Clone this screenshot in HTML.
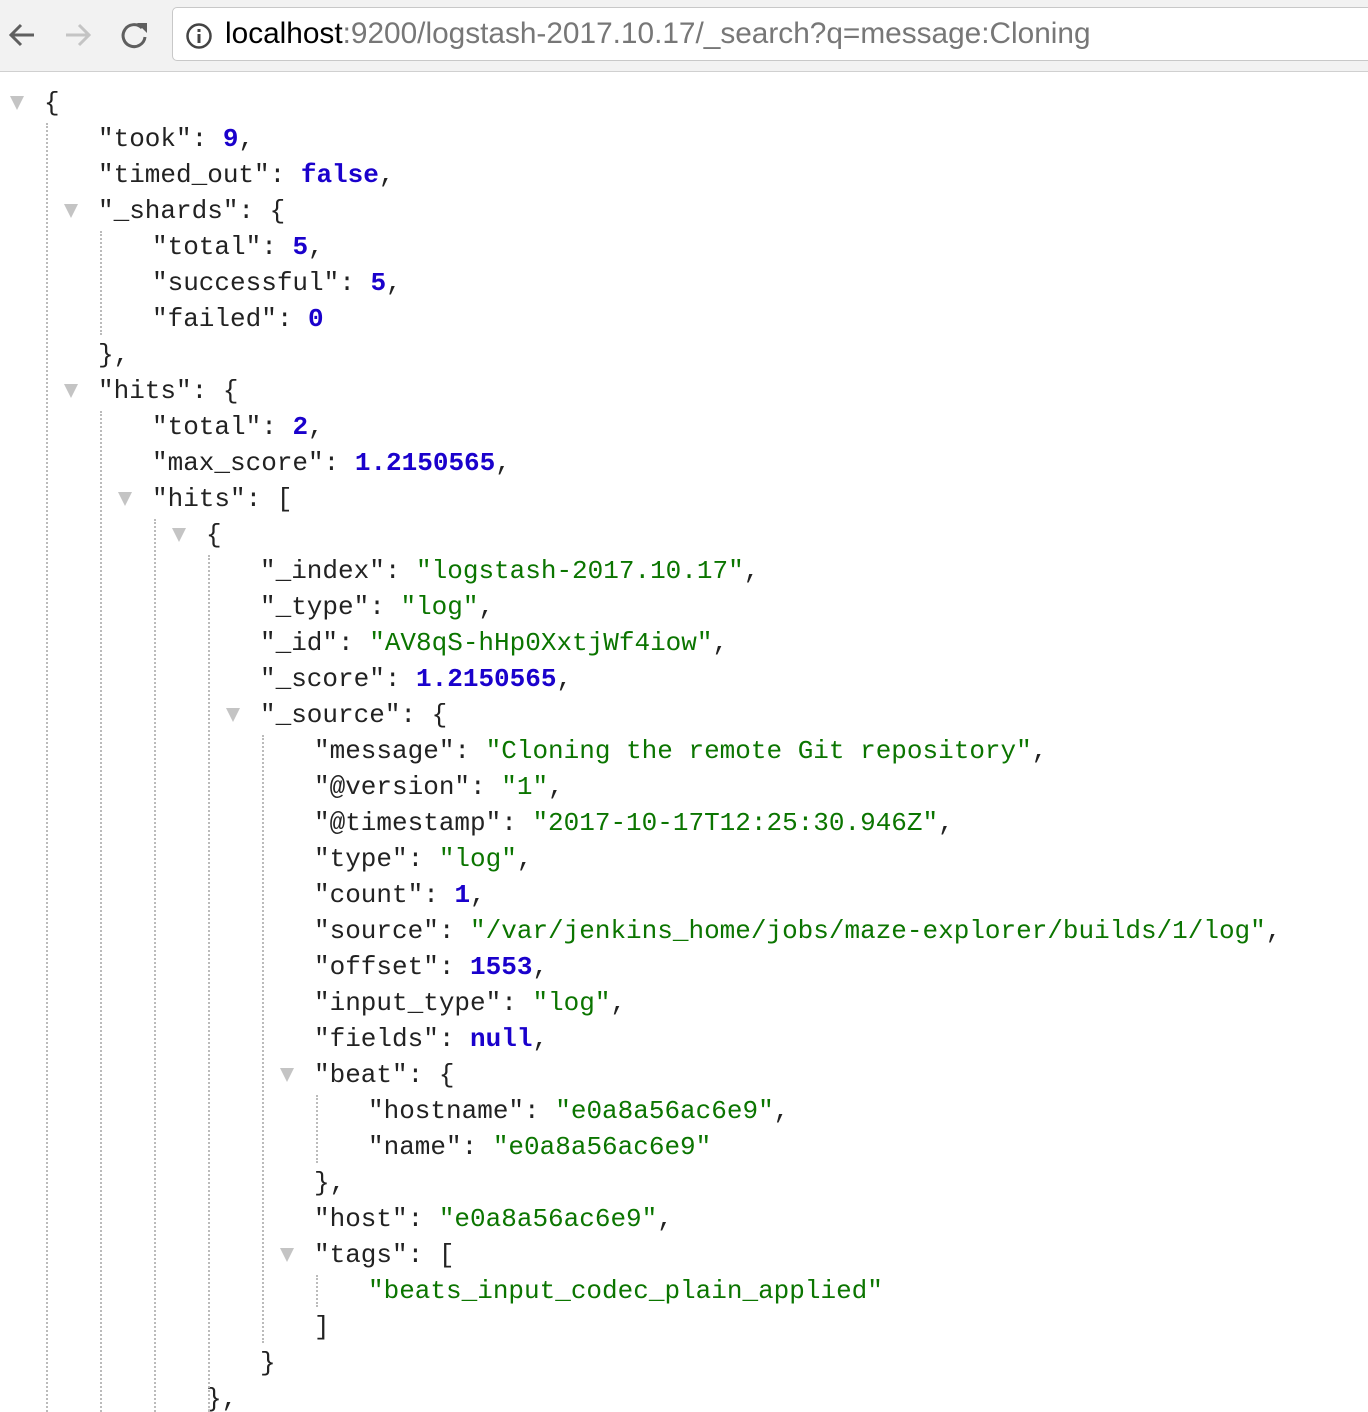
<!DOCTYPE html>
<html><head><meta charset="utf-8"><style>
html,body{margin:0;padding:0;background:#fff;width:1368px;height:1412px;overflow:hidden;position:relative}
.bar{position:absolute;left:0;top:0;width:1368px;height:71px;background:#f2f2f2;border-bottom:1px solid #d0d0d0}
.url{position:absolute;left:172px;top:7px;width:1220px;height:52px;background:#fff;border:1px solid #c8c8c8;border-radius:5px}
.ut{position:absolute;left:225px;top:17px;font:29.8px "Liberation Sans",sans-serif;color:#777;white-space:nowrap;letter-spacing:0}
.ut b{font-weight:normal;color:#000}
.r{position:absolute;height:36px;line-height:36px;font:26px "Liberation Mono",monospace;color:#222;white-space:pre}
.n{color:#1a01cc;font-weight:bold}
.s{color:#0b7500}
.a{position:absolute;width:0;height:0;border-left:7px solid transparent;border-right:7px solid transparent;border-top:14px solid #c4c4c4}
.d{position:absolute;width:0;border-left:2px dotted #bbb}
</style></head><body>
<div class="bar">
<svg style="position:absolute;left:6px;top:20px" width="32" height="30" viewBox="0 0 32 30"><path d="M28 15H6M15 5L5 15l10 10" stroke="#5f5f5f" stroke-width="3" fill="none"/></svg>
<svg style="position:absolute;left:62px;top:20px" width="32" height="30" viewBox="0 0 32 30"><path d="M4 15h22M17 5l10 10-10 10" stroke="#c4c4c4" stroke-width="3" fill="none"/></svg>
<svg style="position:absolute;left:118px;top:19px" width="32" height="32" viewBox="0 0 32 32"><path d="M24 9A11 11 0 1 0 27 18" stroke="#5f5f5f" stroke-width="3" fill="none"/><path d="M19 4h10v10z" fill="#5f5f5f"/></svg>
<div class="url"></div>
<svg style="position:absolute;left:185px;top:22px" width="28" height="28" viewBox="0 0 28 28"><circle cx="14" cy="14" r="11.5" stroke="#444" stroke-width="2.5" fill="none"/><rect x="12.5" y="12" width="3" height="9" fill="#444"/><rect x="12.5" y="7" width="3" height="3" fill="#444"/></svg>
<div class="ut"><b>localhost</b>:9200/logstash-2017.10.17/_search?q=message:Cloning</div>
</div>
<div id="c"></div>
<script>
const rows=[
[0,1,'{'],
[1,0,'"took": <span class="n">9</span>,'],
[1,0,'"timed_out": <span class="n">false</span>,'],
[1,1,'"_shards": {'],
[2,0,'"total": <span class="n">5</span>,'],
[2,0,'"successful": <span class="n">5</span>,'],
[2,0,'"failed": <span class="n">0</span>'],
[1,0,'},'],
[1,1,'"hits": {'],
[2,0,'"total": <span class="n">2</span>,'],
[2,0,'"max_score": <span class="n">1.2150565</span>,'],
[2,1,'"hits": ['],
[3,1,'{'],
[4,0,'"_index": <span class="s">"logstash-2017.10.17"</span>,'],
[4,0,'"_type": <span class="s">"log"</span>,'],
[4,0,'"_id": <span class="s">"AV8qS-hHp0XxtjWf4iow"</span>,'],
[4,0,'"_score": <span class="n">1.2150565</span>,'],
[4,1,'"_source": {'],
[5,0,'"message": <span class="s">"Cloning the remote Git repository"</span>,'],
[5,0,'"@version": <span class="s">"1"</span>,'],
[5,0,'"@timestamp": <span class="s">"2017-10-17T12:25:30.946Z"</span>,'],
[5,0,'"type": <span class="s">"log"</span>,'],
[5,0,'"count": <span class="n">1</span>,'],
[5,0,'"source": <span class="s">"/var/jenkins_home/jobs/maze-explorer/builds/1/log"</span>,'],
[5,0,'"offset": <span class="n">1553</span>,'],
[5,0,'"input_type": <span class="s">"log"</span>,'],
[5,0,'"fields": <span class="n">null</span>,'],
[5,1,'"beat": {'],
[6,0,'"hostname": <span class="s">"e0a8a56ac6e9"</span>,'],
[6,0,'"name": <span class="s">"e0a8a56ac6e9"</span>'],
[5,0,'},'],
[5,0,'"host": <span class="s">"e0a8a56ac6e9"</span>,'],
[5,1,'"tags": ['],
[6,0,'<span class="s">"beats_input_codec_plain_applied"</span>'],
[5,0,']'],
[4,0,'}'],
[3,0,'},']
];
let h='';
rows.forEach((r,i)=>{const x=44+54*r[0],t=88+36*i;
h+=`<div class="r" style="left:${x}px;top:${t}px">${r[2]}</div>`;
if(r[1])h+=`<div class="a" style="left:${x-34}px;top:${t+8}px"></div>`;});
const lines=[[0,0,40],[1,3,7],[1,8,40],[2,11,40],[3,12,40],[4,17,35],[5,27,30],[5,32,34]];
lines.forEach(l=>{const x=46+54*l[0],t=85+36*(l[1]+1)+2,b=Math.min(85+36*l[2]-2,1412);
h+=`<div class="d" style="left:${x}px;top:${t}px;height:${b-t}px"></div>`;});
document.getElementById('c').innerHTML=h;
</script>
</body></html>
